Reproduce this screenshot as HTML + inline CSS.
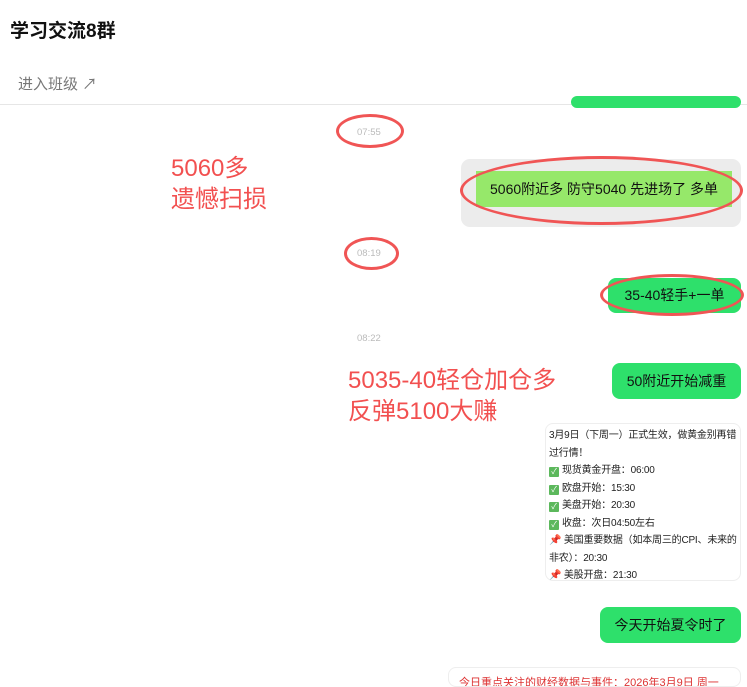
<!DOCTYPE html><html><head><meta charset="utf-8"><style>
body{margin:0;width:747px;height:678px;overflow:hidden;background:#fff;font-family:"Liberation Sans","Noto Sans CJK SC",sans-serif;position:relative}
.a{position:absolute}
.g{background:#2ee06b;border-radius:8px;color:#111;font-size:14px;text-align:center;box-sizing:border-box}
.t{color:#bbb;font-size:9.5px}
.r{color:#f25050;font-size:24px;line-height:31px}
.el{position:absolute;border:3px solid #f05555;border-radius:50%;box-sizing:border-box}
.card{font-size:10px;line-height:17.5px;color:#222;letter-spacing:-0.2px}
.ck{display:inline-block;width:10px;height:10px;background:#5cb85c;color:#fff;font-size:8px;line-height:10px;text-align:center;border-radius:1px;margin-right:3px;vertical-align:-1px}
</style></head><body>
<div class="a" style="left:10px;top:16px;font-size:19px;font-weight:bold;color:#111">学习交流8群</div>
<div class="a" style="left:18px;top:73px;font-size:15px;color:#777">进入班级 ↗</div>
<div class="a" style="left:0;top:104px;width:747px;height:1px;background:#e6e6e6"></div>
<div class="a g" style="left:571px;top:96px;width:170px;height:12px"></div>
<div class="a t" style="left:357px;top:127px">07:55</div>
<div class="el" style="left:336px;top:114px;width:68px;height:34px"></div>
<div class="a r" style="left:171px;top:153px">5060多<br>遗憾扫损</div>
<div class="a" style="left:461px;top:159px;width:280px;height:68px;background:#ececec;border-radius:9px"></div>
<div class="a" style="left:476px;top:171px;width:256px;height:36px;background:#96e86a;font-size:14px;line-height:36px;text-align:center;color:#111">5060附近多 防守5040 先进场了 多单</div>
<div class="el" style="left:460px;top:156px;width:283px;height:69px"></div>
<div class="a t" style="left:357px;top:248px">08:19</div>
<div class="el" style="left:344px;top:237px;width:55px;height:33px"></div>
<div class="a g" style="left:608px;top:278px;width:133px;height:35px;line-height:35px">35-40轻手+一单</div>
<div class="el" style="left:600px;top:274px;width:144px;height:42px"></div>
<div class="a t" style="left:357px;top:333px">08:22</div>
<div class="a r" style="left:348px;top:365px">5035-40轻仓加仓多<br>反弹5100大赚</div>
<div class="a g" style="left:612px;top:363px;width:129px;height:36px;line-height:36px">50附近开始减重</div>
<div class="a card" style="left:545px;top:423px;width:196px;height:158px;border:1px solid #eee;border-radius:8px;padding:3px 3px;box-sizing:border-box">
3月9日（下周一）正式生效，做黄金别再错过行情！<br>
<span class="ck">✓</span>现货黄金开盘：06:00<br>
<span class="ck">✓</span>欧盘开始：15:30<br>
<span class="ck">✓</span>美盘开始：20:30<br>
<span class="ck">✓</span>收盘：次日04:50左右<br>
<span style="color:#d33">📌</span> 美国重要数据（如本周三的CPI、未来的非农）：20:30<br>
<span style="color:#d33">📌</span> 美股开盘：21:30</div>
<div class="a g" style="left:600px;top:607px;width:141px;height:36px;line-height:36px">今天开始夏令时了</div>
<div class="a" style="left:448px;top:667px;width:293px;height:20px;border:1px solid #eee;border-radius:8px;font-size:11px;color:#d33;padding:6px 10px;box-sizing:border-box;white-space:nowrap;overflow:hidden">今日重点关注的财经数据与事件：2026年3月9日 周一</div>
</body></html>
